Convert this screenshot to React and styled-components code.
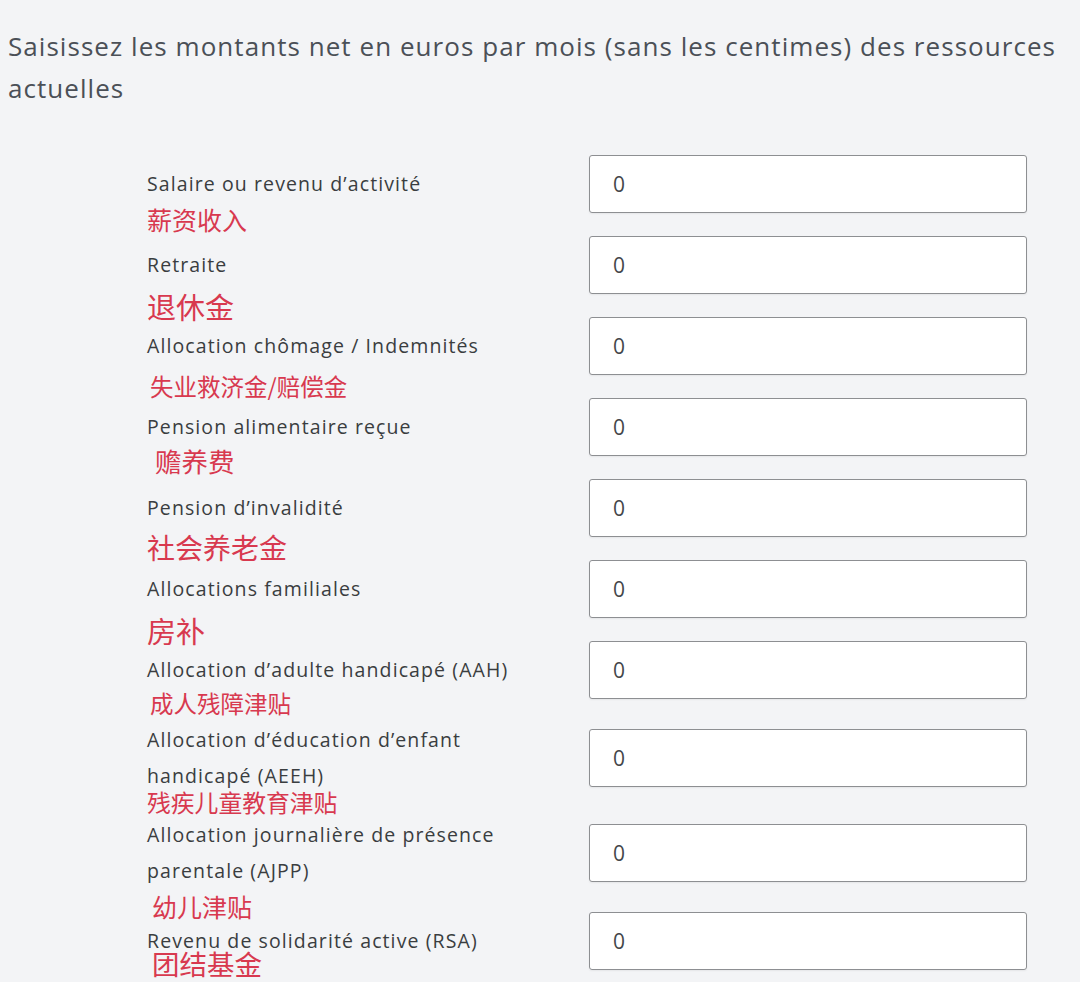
import React from 'react'
import styled, { createGlobalStyle } from 'styled-components'

const GlobalStyle = createGlobalStyle`
  html, body {
    margin: 0;
    background: #f3f4f6;
  }
  body {
    font-family: "Open Sans", "Noto Sans CJK SC", sans-serif;
  }
`

const rows = [
  { label: ['Salaire ou revenu d’activité'], note: '薪资收入', size: 25, dy: 64, dx: 0 },
  { label: ['Retraite'], note: '退休金', size: 29, dy: 70, dx: 0 },
  { label: ['Allocation chômage / Indemnités'], note: '失业救济金/赔偿金', size: 23.5, dy: 70, dx: 3 },
  { label: ['Pension alimentaire reçue'], note: '赡养费', size: 26.5, dy: 63, dx: 8 },
  { label: ['Pension d’invalidité'], note: '社会养老金', size: 28, dy: 68, dx: 0 },
  { label: ['Allocations familiales'], note: '房补', size: 29, dy: 70, dx: 0 },
  { label: ['Allocation d’adulte handicapé (AAH)'], note: '成人残障津贴', size: 23.5, dy: 63, dx: 3 },
  { label: ['Allocation d’éducation d’enfant', 'handicapé (AEEH)'], note: '残疾儿童教育津贴', size: 23.8, dy: 80, dx: 0 },
  { label: ['Allocation journalière de présence', 'parentale (AJPP)'], note: '幼儿津贴', size: 25, dy: 89, dx: 5 },
  { label: ['Revenu de solidarité active (RSA)'], note: '团结基金', size: 27.5, dy: 52, dx: 5 },
]

const App = () => {
  return (
    <Page>
      <GlobalStyle />
      <Intro>
        Saisissez les montants net en euros par mois (sans les centimes) des ressources actuelles
      </Intro>
      <Form>
        {rows.map((row) => (
          <Row key={row.note}>
            <Label>
              {row.label.map((line) => (
                <span key={line}>{line}</span>
              ))}
            </Label>
            <Amount type="text" defaultValue="0" />
            <Note $size={row.size} $dy={row.dy} $dx={row.dx}>{row.note}</Note>
          </Row>
        ))}
      </Form>
    </Page>
  )
}

const Page = styled.div`
  padding: 25px 8px 0 8px;
  min-height: 982px;
  box-sizing: border-box;
`

const Intro = styled.p`
  margin: 0;
  font-size: 26px;
  letter-spacing: 1.05px;
  line-height: 42px;
  color: #4b5057;
  max-width: 1064px;
`

const Form = styled.div`
  display: flex;
  flex-direction: column;
  gap: 23px;
  margin-top: 46px;
  padding-left: 139px;
`

const Row = styled.div`
  position: relative;
  display: grid;
  grid-template-columns: 442px 438px;
  align-items: center;
`

const Label = styled.div`
  display: flex;
  flex-direction: column;
  font-size: 19.5px;
  letter-spacing: 1.1px;
  line-height: 36px;
  color: #3a3d40;
  white-space: nowrap;
`

const Amount = styled.input`
  box-sizing: border-box;
  width: 438px;
  height: 58px;
  padding: 0 0 0 23px;
  border: 1px solid #8d8f92;
  border-radius: 3px;
  background: #fff;
  box-shadow: 0 1px 2px rgba(0, 0, 0, 0.06);
  font-family: "Open Sans", sans-serif;
  font-size: 21px;
  letter-spacing: 1px;
  color: #44474a;
  outline: none;
`

const Note = styled.span`
  position: absolute;
  left: ${(p) => p.$dx}px;
  top: ${(p) => p.$dy}px;
  transform: translateY(-50%);
  font-family: "Noto Sans CJK SC", sans-serif;
  font-size: ${(p) => p.$size}px;
  line-height: 1;
  color: #d8394f;
  white-space: nowrap;
`

export default App
